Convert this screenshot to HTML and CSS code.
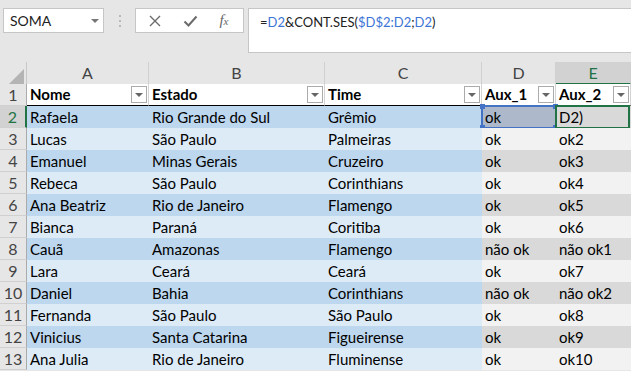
FILE: index.html
```html
<!DOCTYPE html>
<html lang="pt-BR">
<head>
  <meta charset="UTF-8">
  <title>Planilha</title>
  <link rel="stylesheet" href="styles.css">
</head>
<body>
  <div class="formula-bar">
    <div class="name-box">
      <span>SOMA</span>
      <span class="caret"></span>
    </div>
    <div class="grip"><i></i><i></i><i></i></div>
    <div class="fx-buttons">
      <svg width="14" height="14" viewBox="0 0 14 14"><path d="M2 2 L12 12 M12 2 L2 12" stroke="#6b6b6b" stroke-width="1.4" fill="none"/></svg>
      <svg width="15" height="14" viewBox="0 0 15 14"><path d="M1.5 7.5 L5.5 11.5 L13.5 2.5" stroke="#6b6b6b" stroke-width="2" fill="none"/></svg>
      <span class="fx">f<small>x</small></span>
    </div>
    <div class="formula">=<span class="ref">D2</span>&amp;CONT.SES(<span class="ref">$D$2:D2</span>;<span class="ref">D2</span>)</div>
  </div>

  <div class="sheet">
    <div class="row col-heads">
      <div class="corner"><svg width="15" height="15" viewBox="0 0 15 15"><polygon points="15,0 15,15 0,15" fill="#b4b4b4"/></svg></div>
      <div class="col">A</div>
      <div class="col">B</div>
      <div class="col">C</div>
      <div class="col">D</div>
      <div class="col active">E</div>
    </div>

    <div class="row head-row">
      <div class="hdr">1</div>
      <div class="c th"><span>Nome</span><span class="filter"></span></div>
      <div class="c th"><span>Estado</span><span class="filter"></span></div>
      <div class="c th"><span>Time</span><span class="filter"></span></div>
      <div class="c th"><span>Aux_1</span><span class="filter"></span></div>
      <div class="c th"><span>Aux_2</span><span class="filter"></span></div>
    </div>

    <div class="row dark">
      <div class="hdr active">2</div>
      <div class="c">Rafaela</div>
      <div class="c">Rio Grande do Sul</div>
      <div class="c">Grêmio</div>
      <div class="c aux ref-cell">ok<span class="ref-box"><i class="tl"></i><i class="tr"></i><i class="bl"></i><i class="br"></i></span></div>
      <div class="c aux active-cell">D2)<span class="active-box"></span></div>
    </div>
    <div class="row light">
      <div class="hdr">3</div>
      <div class="c">Lucas</div>
      <div class="c">São Paulo</div>
      <div class="c">Palmeiras</div>
      <div class="c aux">ok</div>
      <div class="c aux">ok2</div>
    </div>
    <div class="row dark">
      <div class="hdr">4</div>
      <div class="c">Emanuel</div>
      <div class="c">Minas Gerais</div>
      <div class="c">Cruzeiro</div>
      <div class="c aux">ok</div>
      <div class="c aux">ok3</div>
    </div>
    <div class="row light">
      <div class="hdr">5</div>
      <div class="c">Rebeca</div>
      <div class="c">São Paulo</div>
      <div class="c">Corinthians</div>
      <div class="c aux">ok</div>
      <div class="c aux">ok4</div>
    </div>
    <div class="row dark">
      <div class="hdr">6</div>
      <div class="c">Ana Beatriz</div>
      <div class="c">Rio de Janeiro</div>
      <div class="c">Flamengo</div>
      <div class="c aux">ok</div>
      <div class="c aux">ok5</div>
    </div>
    <div class="row light">
      <div class="hdr">7</div>
      <div class="c">Bianca</div>
      <div class="c">Paraná</div>
      <div class="c">Coritiba</div>
      <div class="c aux">ok</div>
      <div class="c aux">ok6</div>
    </div>
    <div class="row dark">
      <div class="hdr">8</div>
      <div class="c">Cauã</div>
      <div class="c">Amazonas</div>
      <div class="c">Flamengo</div>
      <div class="c aux">não ok</div>
      <div class="c aux">não ok1</div>
    </div>
    <div class="row light">
      <div class="hdr">9</div>
      <div class="c">Lara</div>
      <div class="c">Ceará</div>
      <div class="c">Ceará</div>
      <div class="c aux">ok</div>
      <div class="c aux">ok7</div>
    </div>
    <div class="row dark">
      <div class="hdr">10</div>
      <div class="c">Daniel</div>
      <div class="c">Bahia</div>
      <div class="c">Corinthians</div>
      <div class="c aux">não ok</div>
      <div class="c aux">não ok2</div>
    </div>
    <div class="row light">
      <div class="hdr">11</div>
      <div class="c">Fernanda</div>
      <div class="c">São Paulo</div>
      <div class="c">São Paulo</div>
      <div class="c aux">ok</div>
      <div class="c aux">ok8</div>
    </div>
    <div class="row dark">
      <div class="hdr">12</div>
      <div class="c">Vinicius</div>
      <div class="c">Santa Catarina</div>
      <div class="c">Figueirense</div>
      <div class="c aux">ok</div>
      <div class="c aux">ok9</div>
    </div>
    <div class="row light">
      <div class="hdr">13</div>
      <div class="c">Ana Julia</div>
      <div class="c">Rio de Janeiro</div>
      <div class="c">Fluminense</div>
      <div class="c aux">ok</div>
      <div class="c aux">ok10</div>
    </div>
  </div>
</body>
</html>
```

FILE: styles.css
```css
body {
  margin: 0;
  background: #e6e6e6;
  font-family: Lato, "Liberation Sans", sans-serif;
  overflow: hidden;
}

/* formula bar */
.formula-bar {
  display: flex;
  align-items: flex-start;
  height: 62px;
  padding-top: 8px;
  box-sizing: border-box;
}

.name-box {
  margin-left: 3px;
  width: 101px;
  height: 25px;
  box-sizing: border-box;
  background: #fff;
  border: 1px solid #c6c6c6;
  display: flex;
  align-items: center;
  justify-content: space-between;
  padding: 0 4px 0 6px;
  font-size: 14px;
  color: #222;
}

.caret {
  width: 0;
  height: 0;
  border-left: 4px solid transparent;
  border-right: 4px solid transparent;
  border-top: 4px solid #777;
}

.grip {
  width: 31px;
  height: 25px;
  display: flex;
  flex-direction: column;
  align-items: center;
  justify-content: center;
  gap: 3px;
}

.grip i {
  width: 2px;
  height: 2px;
  background: #b8b8b8;
}

.fx-buttons {
  width: 109px;
  height: 25px;
  box-sizing: border-box;
  background: #fff;
  border: 1px solid #c6c6c6;
  display: flex;
  align-items: center;
  justify-content: space-around;
  padding: 0 4px 0 2px;
}

.fx {
  font-family: "Liberation Serif", serif;
  font-style: italic;
  font-size: 15px;
  color: #666;
}

.fx small {
  font-size: 11px;
}

.formula {
  margin-left: 4px;
  flex: 1;
  margin-right: -1px;
  height: 45px;
  box-sizing: border-box;
  background: #fff;
  border: 1px solid #c6c6c6;
  padding: 5px 0 0 11px;
  font-size: 13px;
  color: #222;
}

.formula .ref {
  color: #3c74d6;
}

/* grid */
.sheet {
  font-size: 15px;
}

.row {
  display: grid;
  grid-template-columns: 27px 122px 176px 157px 74px 75px;
  height: 22px;
}

.col-heads {
  height: 22px;
}

.corner {
  border-right: 1px solid #c8c8c8;
  display: flex;
  align-items: flex-end;
  justify-content: flex-end;
  padding: 0 2px 1px 0;
}

.col {
  border-right: 1px solid #d0d0d0;
  border-bottom: 1px solid #c8c8c8;
  text-align: center;
  line-height: 21px;
  font-size: 16px;
  color: #444;
}

.col.active {
  background: #d2d2d2;
  color: #217346;
  border-bottom: 2px solid #217346;
}

.hdr {
  border-right: 1px solid #ababab;
  border-bottom: 1px solid #d0d0d0;
  text-align: center;
  line-height: 21px;
  font-size: 16px;
  color: #444;
}

.hdr.active {
  background: #d2d2d2;
  color: #217346;
  border-right: 2px solid #217346;
}

.c {
  padding-left: 3px;
  line-height: 22px;
  white-space: nowrap;
  overflow: hidden;
  color: #000;
  position: relative;
}

.head-row .c {
  background: #fff;
  border-right: 1px solid #d4d4d4;
  border-bottom: 1px solid #000;
  line-height: 21px;
}

.th {
  display: flex;
  justify-content: space-between;
  align-items: center;
  padding-right: 1px;
  font-weight: bold;
}

.filter {
  width: 16px;
  height: 17px;
  box-sizing: border-box;
  border: 1px solid #ababab;
  background: #fff;
  display: flex;
  align-items: center;
  justify-content: center;
}

.filter::after {
  content: "";
  border-left: 4px solid transparent;
  border-right: 4px solid transparent;
  border-top: 4px solid #666;
}

.dark .c { background: #bdd7ee; }
.light .c { background: #ddebf7; }
.dark .c.aux { background: #d9d9d9; }
.light .c.aux { background: #f2f2f2; }

.row.dark .ref-cell {
  background: #adb9ca;
  overflow: visible;
}

.ref-box {
  position: absolute;
  left: -1px;
  top: -1px;
  right: -1px;
  bottom: -1px;
  border: 2px solid #4472c4;
}

.ref-box i {
  position: absolute;
  width: 5px;
  height: 5px;
  background: #4472c4;
}

.ref-box .tl { left: -3px; top: -3px; }
.ref-box .tr { right: -3px; top: -3px; }
.ref-box .bl { left: -3px; bottom: -3px; }
.ref-box .br { right: -3px; bottom: -3px; }

.active-cell {
  overflow: visible;
}

.active-box {
  position: absolute;
  left: -1px;
  top: -1px;
  right: 1px;
  bottom: -1px;
  border: 2px solid #217346;
}
```
